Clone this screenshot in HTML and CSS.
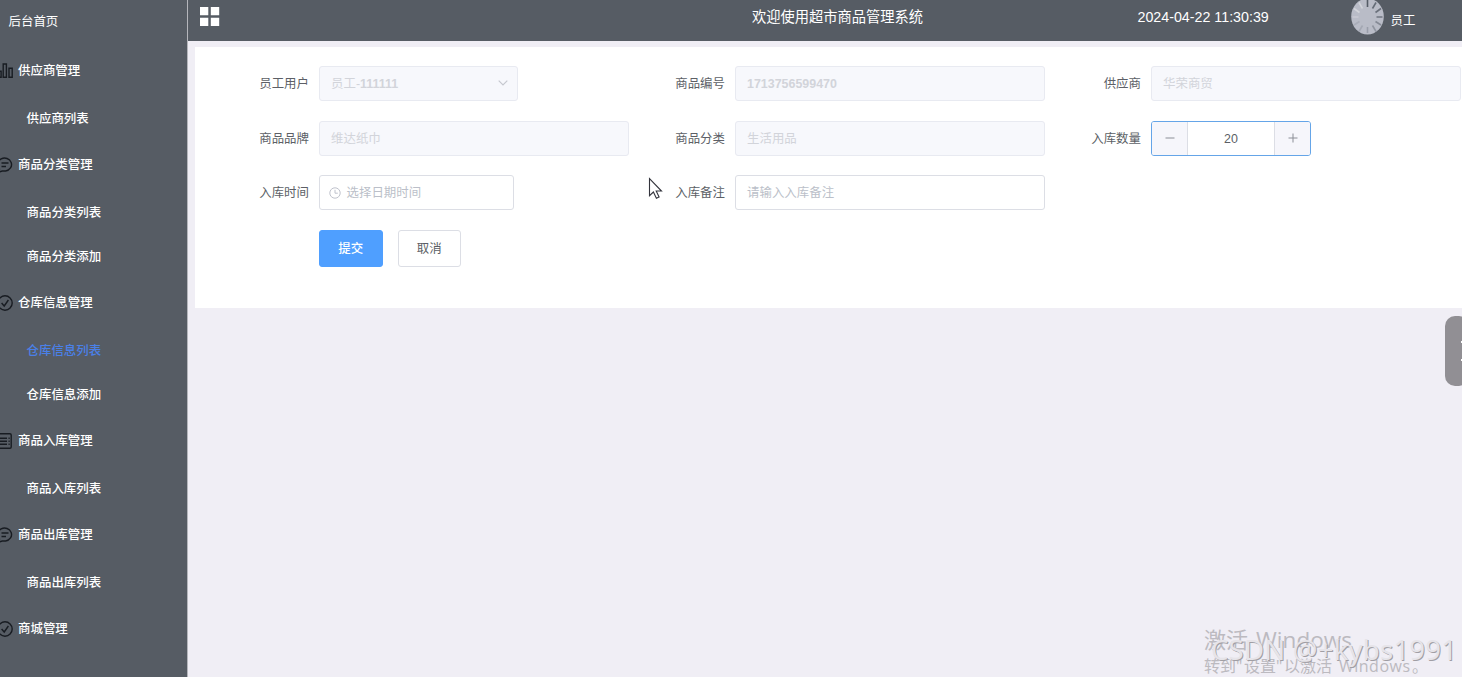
FILE: index.html
```html
<!DOCTYPE html>
<html lang="zh-CN">
<head>
<meta charset="utf-8">
<title>超市商品管理系统</title>
<link rel="stylesheet" href="styles.css">
</head>
<body>
<svg class="defs" width="0" height="0" aria-hidden="true">
  <symbol id="i-bars" viewBox="0 0 16 16"><path d="M1.6 8.2h2.5v6H1.6zM6.200 1h3.200v13.200H6.200zM12 5.200h3.200v9H12z"/></symbol>
  <symbol id="i-chat" viewBox="0 0 16 16"><path d="M2.4 15V11.800A6.900 6.500 0 1 1 8.600 14H5.200zM4.500 6h7M4.500 9.500h4.500"/></symbol>
  <symbol id="i-check" viewBox="0 0 16 16"><circle cx="8" cy="8" r="7.200"/><path d="M4.600 8l2.600 3 4.200-6"/></symbol>
  <symbol id="i-list" viewBox="0 0 16 16"><rect x=".8" y=".8" width="13.400" height="14.400" rx="1.300"/><path d="M3 5.200h7M3 8.200h7M3 11.200h7M11.500 5.200h1.200M11.500 8.200h1.200M11.500 11.200h1.200"/></symbol>
</svg>
<div class="app">
  <nav class="sidebar">
    <div class="home">后台首页</div>
    <div class="group"><svg class="icon"><use href="#i-bars"/></svg>供应商管理</div>
    <div class="item">供应商列表</div>
    <div class="group"><svg class="icon"><use href="#i-chat"/></svg>商品分类管理</div>
    <div class="item">商品分类列表</div>
    <div class="item">商品分类添加</div>
    <div class="group"><svg class="icon"><use href="#i-check"/></svg>仓库信息管理</div>
    <div class="item active">仓库信息列表</div>
    <div class="item">仓库信息添加</div>
    <div class="group"><svg class="icon"><use href="#i-list"/></svg>商品入库管理</div>
    <div class="item">商品入库列表</div>
    <div class="group"><svg class="icon"><use href="#i-chat"/></svg>商品出库管理</div>
    <div class="item">商品出库列表</div>
    <div class="group"><svg class="icon"><use href="#i-check"/></svg>商城管理</div>
  </nav>
  <div class="main">
    <header class="topbar">
      <svg class="menu" viewBox="0 0 20 20"><path d="M0 0h8.300v8.300H0zM10.800 0h8.400v8.300h-8.400zM0 10.700h8.300v8.300H0zM10.800 10.700h8.400v8.300h-8.400z"/></svg>
      <h1 class="title">欢迎使用超市商品管理系统</h1>
      <time class="clock">2024-04-22 11:30:39</time>
      <svg class="avatar" viewBox="0 0 33 36">
        <ellipse cx="16.500" cy="16.500" rx="16.300" ry="18" fill="#b9bcc7"/>
        <g stroke-width="1.600">
          <path d="M16.500 0v7" stroke="#555c67"/>
          <path d="M21.500 8.500l3.500-6" stroke="#656c77"/>
          <path d="M24.500 12.500l5.500-4" stroke="#6b717c"/>
          <path d="M25.500 17h6" stroke="#747a85"/>
          <path d="M24.500 21.500l5.500 3.500" stroke="#858a95"/>
          <path d="M21.500 25.500l3.500 6" stroke="#9095a0"/>
          <path d="M16.500 27v6" stroke="#999eaa"/>
          <path d="M11.500 25.500l-3.500 6" stroke="#a4a8b3"/>
          <path d="M8.500 21.500l-5.500 3.500" stroke="#a9adb8"/>
          <path d="M7.500 17h-6" stroke="#c8cad2"/>
          <path d="M8.500 12.500l-5.500-4M11.500 8.500l-3.500-6" stroke="#d2d4da"/>
        </g>
      </svg>
      <span class="user">员工</span>
    </header>
    <section class="card">
      <form class="form">
        <label class="label">员工用户</label>
        <div class="field disabled select"><span>员工-<b>111111</b></span><svg class="arrow" viewBox="0 0 10 6"><path d="M.7.700L5 5 9.300.700"/></svg></div>
        <label class="label">商品编号</label>
        <div class="field disabled"><b>1713756599470</b></div>
        <label class="label">供应商</label>
        <div class="field disabled">华荣商贸</div>

        <label class="label">商品品牌</label>
        <div class="field disabled">维达纸巾</div>
        <label class="label">商品分类</label>
        <div class="field disabled">生活用品</div>
        <label class="label">入库数量</label>
        <div class="field stepper">
          <span class="step"><svg viewBox="0 0 10 10"><path d="M.5 5h9"/></svg></span>
          <span class="count">20</span>
          <span class="step"><svg viewBox="0 0 10 10"><path d="M.5 5h9M5 .5v9"/></svg></span>
        </div>

        <label class="label">入库时间</label>
        <div class="field date"><svg class="time" viewBox="0 0 12 12"><circle cx="6" cy="6" r="5.200"/><path d="M6 2.800v3.400h2.800"/></svg>选择日期时间</div>
        <label class="label">入库备注</label>
        <div class="field">请输入入库备注</div>
      </form>
      <div class="actions">
        <button class="btn primary">提交</button>
        <button class="btn">取消</button>
      </div>
    </section>
  </div>
</div>
<div class="drawer"><i></i><i></i></div>
<svg class="cursor" viewBox="0 0 15 23"><path d="M1.500 1.500v17.200l3.900-3.700 3 6.300 2.700-1.300-2.900-6h5.300z"/></svg>
<svg class="watermark" viewBox="0 0 272 67">
  <g class="activate">
    <text y="37.500"><tspan x="14" font-size="22">激活</tspan><tspan x="66" font-size="22.500" textLength="96">Windows</tspan></text>
    <text y="61.500" font-size="16"><tspan x="14">转到"</tspan><tspan x="54">设置"</tspan><tspan x="94">以激活</tspan><tspan x="149" textLength="71">Windows</tspan><tspan x="222">。</tspan></text>
  </g>
  <g class="credit">
    <text class="shade" x="22" y="51" textLength="246">CSDN @+kybs1991</text>
    <text class="light" x="21" y="50" textLength="246">CSDN @+kybs1991</text>
  </g>
</svg>
</body>
</html>
```
FILE: styles.css
```css
* { box-sizing: border-box; }
body {
  margin: 0;
  height: 677px;
  overflow: hidden;
  background: #f0eef5;
  color: #5c5f66;
  font: 12.450px/1.3 "Liberation Sans", "Noto Sans CJK SC", sans-serif;
}
.defs { position: absolute; }
.app { display: flex; height: 677px; }
.sidebar {
  flex: none;
  width: 188px;
  background: #565c64;
  border-right: 1px solid #b5b6bc;
  color: #fff;
  font-weight: 500;
}
.home, .group, .item { display: flex; align-items: center; padding-top: 2px; }
.home { height: 46px; padding: 0 0 2px 8.500px; font-weight: 400; }
.group { height: 50px; gap: 5px; padding-top: 1px; }
.item { height: 44px; padding-left: 26.500px; }
.active { color: #4a80e8; }
.icon {
  flex: none;
  width: 16px;
  height: 16px;
  margin: -2px 0 0 -3px;
  fill: none;
  stroke: #181c22;
  stroke-width: 1.400;
}
.main { flex: 1; min-width: 0; }
.topbar {
  display: flex;
  height: 41px;
  background: #565c64;
  color: #fff;
  font-size: 14.250px;
  line-height: 20px;
}
.menu { width: 20px; height: 20px; margin: 7px 0 0 12px; fill: #fff; }
.title { margin: 7px 0 0 532px; width: 385.500px; font-size: inherit; font-weight: 400; }
.clock { width: 213.500px; margin-top: 7px; white-space: nowrap; }
.avatar { width: 33px; height: 36px; }
.user { margin: 11px 0 0 6.500px; font-size: 12.450px; }
.card {
  width: 1280px;
  height: 261px;
  margin: 6px 0 0 7px;
  padding-top: 18.800px;
  background: #fff;
}
.form {
  display: grid;
  grid-template-columns: 114px 310px 86px 310px 86px 310px;
  grid-template-rows: repeat(3, 35px);
  column-gap: 10px;
  row-gap: 19.800px;
}
.label { line-height: 36px; text-align: right; }
.field {
  display: flex;
  align-items: center;
  padding: 1px 11px 0;
  border: 1px solid #dcdee5;
  border-radius: 3px;
  background: #fff;
  color: #bbbfc9;
}
.disabled { background: #f7f8fc; border-color: #e8eaf1; color: #d2d4da; }
.select { width: 199px; justify-content: space-between; padding-right: 9px; }
.arrow { width: 10px; height: 6px; margin-top: -2px; fill: none; stroke: #c6c8cf; stroke-width: 1.200; }
.date { width: 195px; padding-left: 9px; gap: 5.500px; }
.time { width: 12px; height: 12px; margin-top: -1px; fill: none; stroke: #bfc2cc; }
.stepper { width: 160px; padding: 0; border-color: #65a5e8; overflow: hidden; }
.step {
  display: flex;
  align-items: center;
  justify-content: center;
  width: 35px;
  height: 100%;
  background: #f6f6fb;
}
.step svg { width: 10px; height: 10px; stroke: #8b8e96; stroke-width: 1; }
.count {
  flex: 1;
  height: 100%;
  border: solid #dcdee5;
  border-width: 0 1px;
  line-height: 34px;
  text-align: center;
  color: #5c5f66;
}
.actions { display: flex; gap: 15px; padding: 20px 0 0 124px; }
.btn {
  width: 63.500px;
  height: 37px;
  padding: 1px 0 0;
  border: 1px solid #dcdee5;
  border-radius: 3px;
  background: #fff;
  color: #5c5f66;
  font: inherit;
}
.primary { background: #4f9fff; border-color: #4f9fff; color: #fff; font-weight: 500; }
.drawer {
  position: absolute;
  left: 1445px;
  top: 316px;
  width: 24px;
  height: 70px;
  border-radius: 10px;
  background: #918f94;
}
.drawer i { position: absolute; left: 16px; top: 25px; width: 1px; height: 2px; background: #fff; }
.drawer i + i { top: 43px; }
.cursor {
  position: absolute;
  left: 648px;
  top: 177px;
  width: 15px;
  height: 23px;
  fill: #fff;
  stroke: #33343c;
  stroke-width: 1.100;
}
.watermark { position: absolute; left: 1190px; top: 610px; width: 272px; height: 67px; }
.activate { fill: #bcbac0; font-family: "Open Sans", "Noto Sans CJK SC", sans-serif; }
.credit { font-family: "Noto Sans", "DejaVu Sans", sans-serif; font-size: 27.500px; }
.shade { fill: #a09ea4; }
.light { fill: #e6e4e9; }
```
